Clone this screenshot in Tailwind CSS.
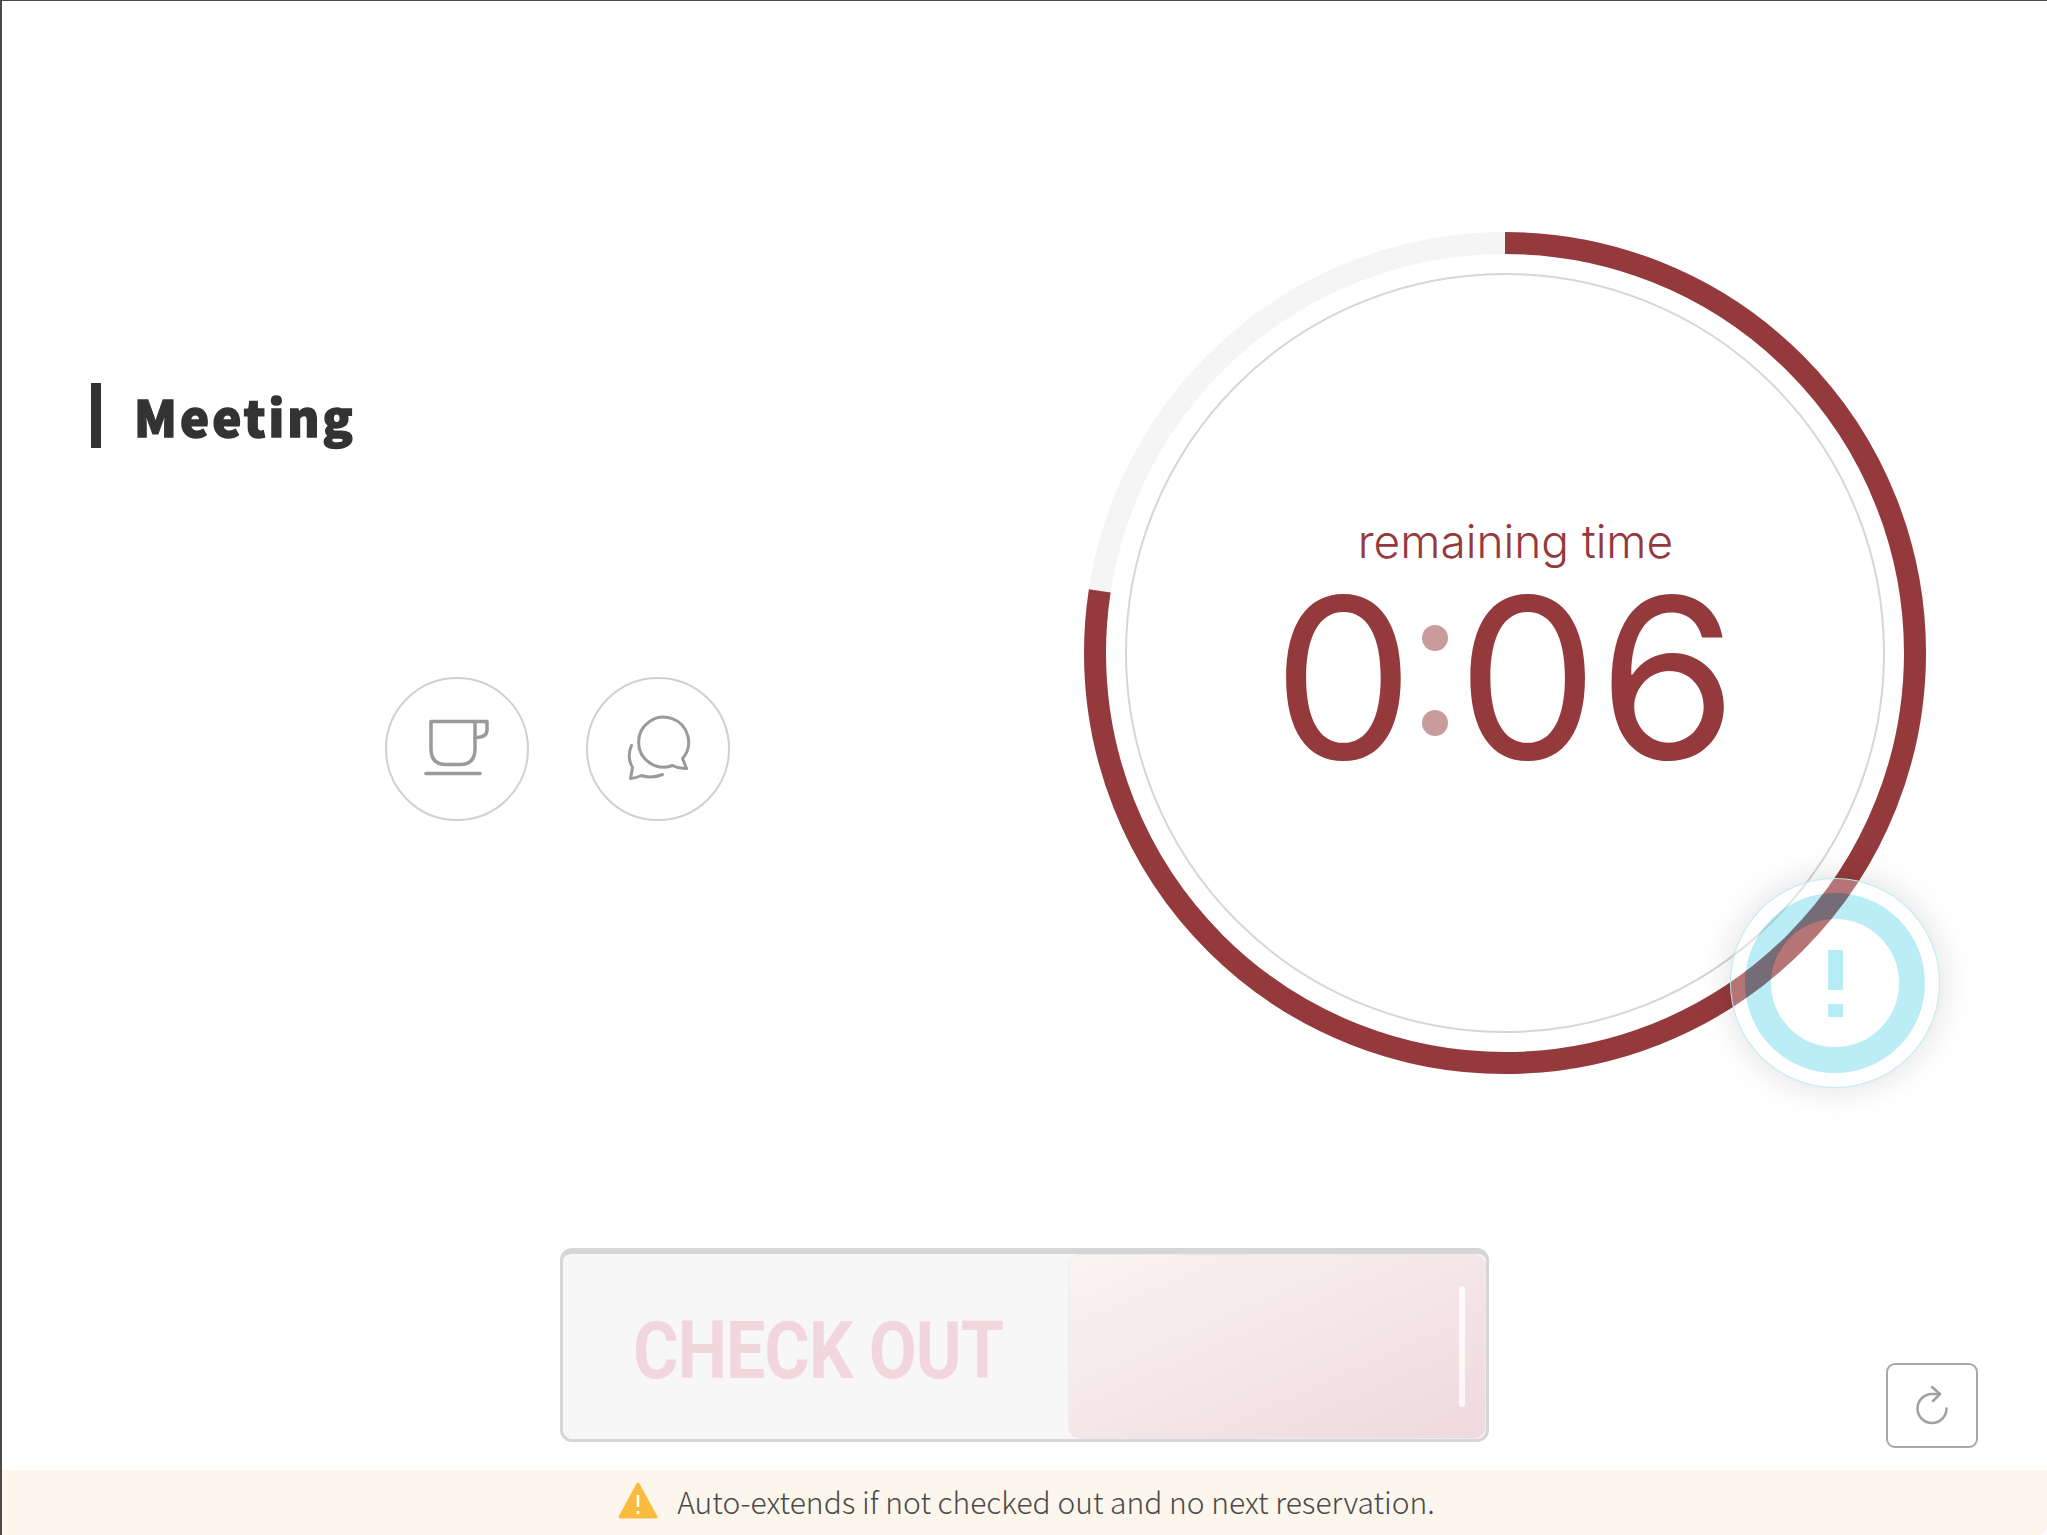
<!DOCTYPE html>
<html lang="en">
<head>
  <meta charset="UTF-8" />
  <title>Meeting</title>
  <script src="https://cdn.jsdelivr.net/npm/@tailwindcss/browser@4"></script>
</head>
<body class="bg-white">
  <div class="w-[2047px] h-[1535px] flex flex-col overflow-hidden bg-white border-t border-l-2 border-[#4a4a4a]">

    <main class="flex-1 flex flex-col">
      <section class="flex justify-between pt-[231px] pl-[89px] pr-[121px]">
        <!-- left: title and icons -->
        <div class="pt-[151px]">
          <div class="flex items-center h-[65px] border-l-[10px] border-[#333] pl-[33px]">
            <h1 class="font-['Noto_Sans_CJK_KR',sans-serif] font-black text-[49px] leading-none tracking-[3px] text-[#333] [-webkit-text-stroke:1.5px_#333]">Meeting</h1>
          </div>
          <div class="flex gap-[57px] mt-[229px] ml-[294px]">
            <button class="w-[144px] h-[144px] rounded-full border-2 border-[#d0d0d0] flex items-center justify-center">
              <svg width="70" height="70" viewBox="0 0 70 70" fill="none" stroke="#9a9a9a" stroke-width="3.5" stroke-linecap="round" stroke-linejoin="round">
                <path d="M9 7.500H53V35Q53 50.500 38 50.500H24Q9 50.500 9 35Z" />
                <path d="M53 7.500H65V16Q65 23.500 53 23.500" />
                <path d="M4 59.500H58" />
              </svg>
            </button>
            <button class="w-[144px] h-[144px] rounded-full border-2 border-[#d0d0d0] flex items-center justify-center">
              <svg width="70" height="70" viewBox="0 0 70 70" fill="none" stroke="#9a9a9a" stroke-width="3" stroke-linecap="round" stroke-linejoin="round">
                <path d="M49.500 51.500A25 25 0 1 1 59.500 44.500L63.500 54.500Q56 55 49.500 51.500Z" />
                <path d="M8.500 31.500Q3.500 43 9.500 53.500L7.500 64.500Q13 64 18.500 61.500Q29 65 39.500 60.500" />
              </svg>
            </button>
          </div>
        </div>

        <!-- right: timer -->
        <div class="relative w-[842px] h-[842px] flex flex-col items-center">
          <svg class="absolute inset-0" width="842" height="842" viewBox="0 0 842 842" fill="none">
            <circle cx="421" cy="421" r="410" stroke="#f5f5f5" stroke-width="22" />
            <circle cx="421" cy="421" r="379" stroke="#d6d6d6" stroke-width="2" />
            <circle cx="421" cy="421" r="410" stroke="#953a3c" stroke-width="22" stroke-dasharray="1994 2576" transform="rotate(-90 421 421)" />
          </svg>
          <p class="relative mt-[286px] ml-[21px] font-['Inter',sans-serif] font-[350] text-[46px] leading-[46px] text-[#953a3c]">remaining time</p>
          <div class="relative mt-[29px] flex font-['Inter',sans-serif] font-normal text-[224px] leading-[170px] text-[#953a3c]">
            <span>0</span>
            <span class="relative w-[43px] text-[20px] leading-none text-transparent text-center">:
              <span class="absolute left-[8px] top-[32px] w-[26px] h-[26px] rounded-full bg-[#c89b9c]"></span>
              <span class="absolute left-[8px] top-[117px] w-[26px] h-[26px] rounded-full bg-[#c89b9c]"></span>
            </span>
            <span>06</span>
          </div>

          <!-- alert button over the ring -->
          <button class="absolute left-[647px] top-[647px] w-[208px] h-[208px] rounded-full border-[14px] border-white/30 shadow-[0_0_0_1px_#bdeef5,0_0_36px_rgba(0,0,0,0.14)]">
            <span class="block w-[180px] h-[180px] rounded-full border-[26px] border-[#3acbe4]/35">
              <span class="w-full h-full rounded-full bg-white/30 flex flex-col items-center justify-center gap-[14px]">
                <span class="w-[15px] h-[40px] bg-[#b8ecf5]"></span>
                <span class="w-[15px] h-[13px] bg-[#b8ecf5]"></span>
              </span>
            </span>
          </button>
        </div>
      </section>

      <section class="flex items-start mt-[174px] pl-[558px] pr-[69px]">
        <div class="relative flex items-center w-[929px] h-[194px] rounded-[12px] bg-[#f7f7f7] border-[3px] border-t-[6px] border-[#d6d6d6]">
          <span class="inline-block origin-left scale-x-[0.87] ml-[70px] mt-[8px] font-['Roboto',sans-serif] font-bold text-[80px] leading-none tracking-[-1px] text-[#f2d6de]">CHECK OUT</span>
          <!-- slider handle -->
          <div class="absolute right-0 top-0 bottom-0 w-[418px] rounded-[12px] border border-[#ececec] bg-linear-to-br from-[#fbf3f3] to-[#eed9de] flex items-center justify-end pr-[20px]">
            <span class="w-[6px] h-[121px] rounded-full bg-white/80"></span>
          </div>
        </div>
        <button class="ml-auto mt-[115px] w-[92px] h-[85px] rounded-[9px] border-2 border-[#a8a8a8] flex items-center justify-center">
          <svg width="40" height="44" viewBox="0 0 40 44" fill="none" stroke="#a0a0a0" stroke-width="2.500" stroke-linecap="round" stroke-linejoin="round">
            <path d="M34.500 24.500A14.500 14.500 0 1 1 20 10H28" />
            <path d="M20 3L28 10L21 17" />
          </svg>
        </button>
      </section>
    </main>

    <footer class="h-[65px] flex items-center justify-center gap-[19px] pl-[4px] pb-[3px] bg-[#fdf6ec] rounded-br-lg">
      <svg width="40" height="38" viewBox="0 0 40 38">
        <path d="M20 2L38 35H2Z" fill="#f9bc41" stroke="#f9bc41" stroke-width="3" stroke-linejoin="round" />
        <path d="M20 13V25M20 29V32" stroke="#fff" stroke-width="2.500" />
      </svg>
      <p class="font-['Noto_Sans_CJK_KR',sans-serif] font-light text-[30px] leading-none text-[#4a4a4a]">Auto-extends if not checked out and no next reservation.</p>
    </footer>
  </div>
</body>
</html>
